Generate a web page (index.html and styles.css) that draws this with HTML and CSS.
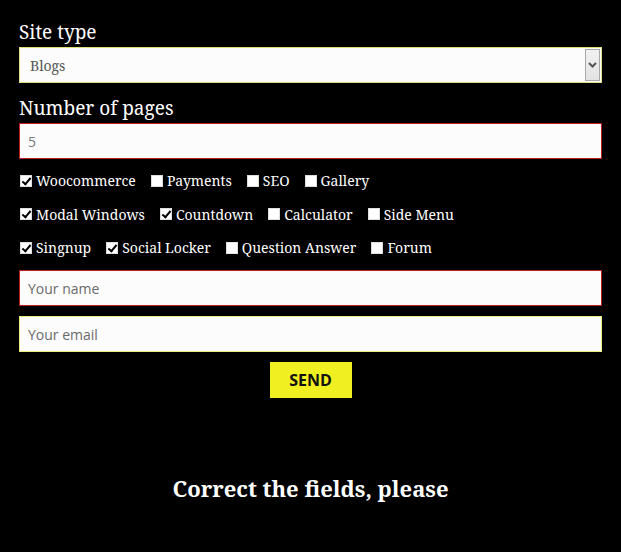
FILE: index.html
```html
<!DOCTYPE html>
<html>
<head>
<meta charset="utf-8">
<link rel="stylesheet" href="styles.css">
</head>
<body>
<form class="form">
  <label class="field-label">Site type</label>
  <div class="select-wrap">
    <select class="select"><option>Blogs</option></select>
    <span class="select-arrow"><svg width="9" height="6" viewBox="0 0 9 6"><path d="M1 1 L4.5 4.5 L8 1" fill="none" stroke="#555" stroke-width="2"/></svg></span>
  </div>
  <label class="field-label second">Number of pages</label>
  <input class="input invalid num" type="text" value="5">

  <div class="checks">
    <div class="row">
      <label class="chk"><input type="checkbox" checked><span>Woocommerce</span></label>
      <label class="chk"><input type="checkbox"><span>Payments</span></label>
      <label class="chk"><input type="checkbox"><span>SEO</span></label>
      <label class="chk"><input type="checkbox"><span>Gallery</span></label>
    </div>
    <div class="row">
      <label class="chk"><input type="checkbox" checked><span>Modal Windows</span></label>
      <label class="chk"><input type="checkbox" checked><span>Countdown</span></label>
      <label class="chk"><input type="checkbox"><span>Calculator</span></label>
      <label class="chk"><input type="checkbox"><span>Side Menu</span></label>
    </div>
    <div class="row">
      <label class="chk"><input type="checkbox" checked><span>Singnup</span></label>
      <label class="chk"><input type="checkbox" checked><span>Social Locker</span></label>
      <label class="chk"><input type="checkbox"><span>Question Answer</span></label>
      <label class="chk"><input type="checkbox"><span>Forum</span></label>
    </div>
  </div>

  <input class="input invalid sans" type="text" placeholder="Your name">
  <input class="input valid sans" type="text" placeholder="Your email">
  <div class="actions"><button type="button" class="send">SEND</button></div>
  <p class="message">Correct the fields, please</p>
</form>
</body>
</html>
```
FILE: styles.css
```css
html, body {
  margin: 0;
  background: #000;
}
body {
  width: 621px;
  height: 552px;
  overflow: hidden;
  font-family: "Noto Serif", "DejaVu Serif", serif;
  color: #fff;
}
.form {
  padding: 19px 19px 0 19px;
  display: flex;
  flex-direction: column;
}
.field-label {
  font-size: 19px;
  line-height: 26px;
  height: 28px;
  display: block;
}
.field-label.second {
  margin-top: 12px;
}
.select-wrap {
  position: relative;
  height: 36px;
}
.select {
  appearance: none;
  -webkit-appearance: none;
  display: block;
  width: 100%;
  height: 36px;
  box-sizing: border-box;
  border: 1px solid #dede7c;
  background: #fcfcfc;
  font-family: "Noto Serif", "DejaVu Serif", serif;
  font-size: 14px;
  color: #555;
  padding: 0 10px;
  border-radius: 0;
  outline: none;
}
.select-arrow {
  position: absolute;
  right: 2px;
  top: 2px;
  width: 15px;
  height: 32px;
  box-sizing: border-box;
  background: linear-gradient(#f2f2f2, #e2e2e2);
  border: 1px solid #a8a8a8;
  display: flex;
  align-items: center;
  justify-content: center;
}
.input {
  display: block;
  width: 100%;
  height: 36px;
  box-sizing: border-box;
  background: #fcfcfc;
  border: 1px solid #dede7c;
  padding: 0 8px;
  font-size: 14px;
  color: #666;
  outline: none;
  border-radius: 0;
}
.input.invalid {
  border-color: #c01c1c;
}
.input.valid {
  border-color: #ecec78;
}
.num {
  font-family: "Open Sans", sans-serif;
  color: #777;
}
.sans {
  font-family: "Open Sans", sans-serif;
  font-size: 14px;
}
.sans::placeholder {
  color: #6a6a6a;
}
.checks {
  margin-top: 10px;
  margin-bottom: 11px;
  display: flex;
  flex-direction: column;
  gap: 10.5px;
}
.row {
  display: flex;
  gap: 14px;
  height: 23px;
  align-items: center;
}
.chk {
  display: flex;
  align-items: center;
  gap: 4px;
  font-size: 14px;
}
.chk input {
  appearance: none;
  -webkit-appearance: none;
  margin: 0 0 0 1px;
  width: 12px;
  height: 12px;
  background: #fff;
  border: 1px solid #ddd;
  position: relative;
  box-sizing: border-box;
}
.chk input:checked::after {
  content: "";
  position: absolute;
  left: 3px;
  top: 0px;
  width: 3px;
  height: 7px;
  border: solid #000;
  border-width: 0 2px 2px 0;
  transform: rotate(40deg);
}
.input + .input {
  margin-top: 10px;
}
.actions {
  display: flex;
  justify-content: center;
  margin-top: 10px;
}
.send {
  width: 82px;
  height: 36px;
  background: #efef22;
  border: none;
  border-radius: 0;
  font-family: "Open Sans", sans-serif;
  font-weight: 700;
  font-size: 16px;
  color: #111;
  padding: 0;
}
.message {
  margin: 75px 0 0 0;
  text-align: center;
  font-weight: 700;
  font-size: 22px;
}
```
